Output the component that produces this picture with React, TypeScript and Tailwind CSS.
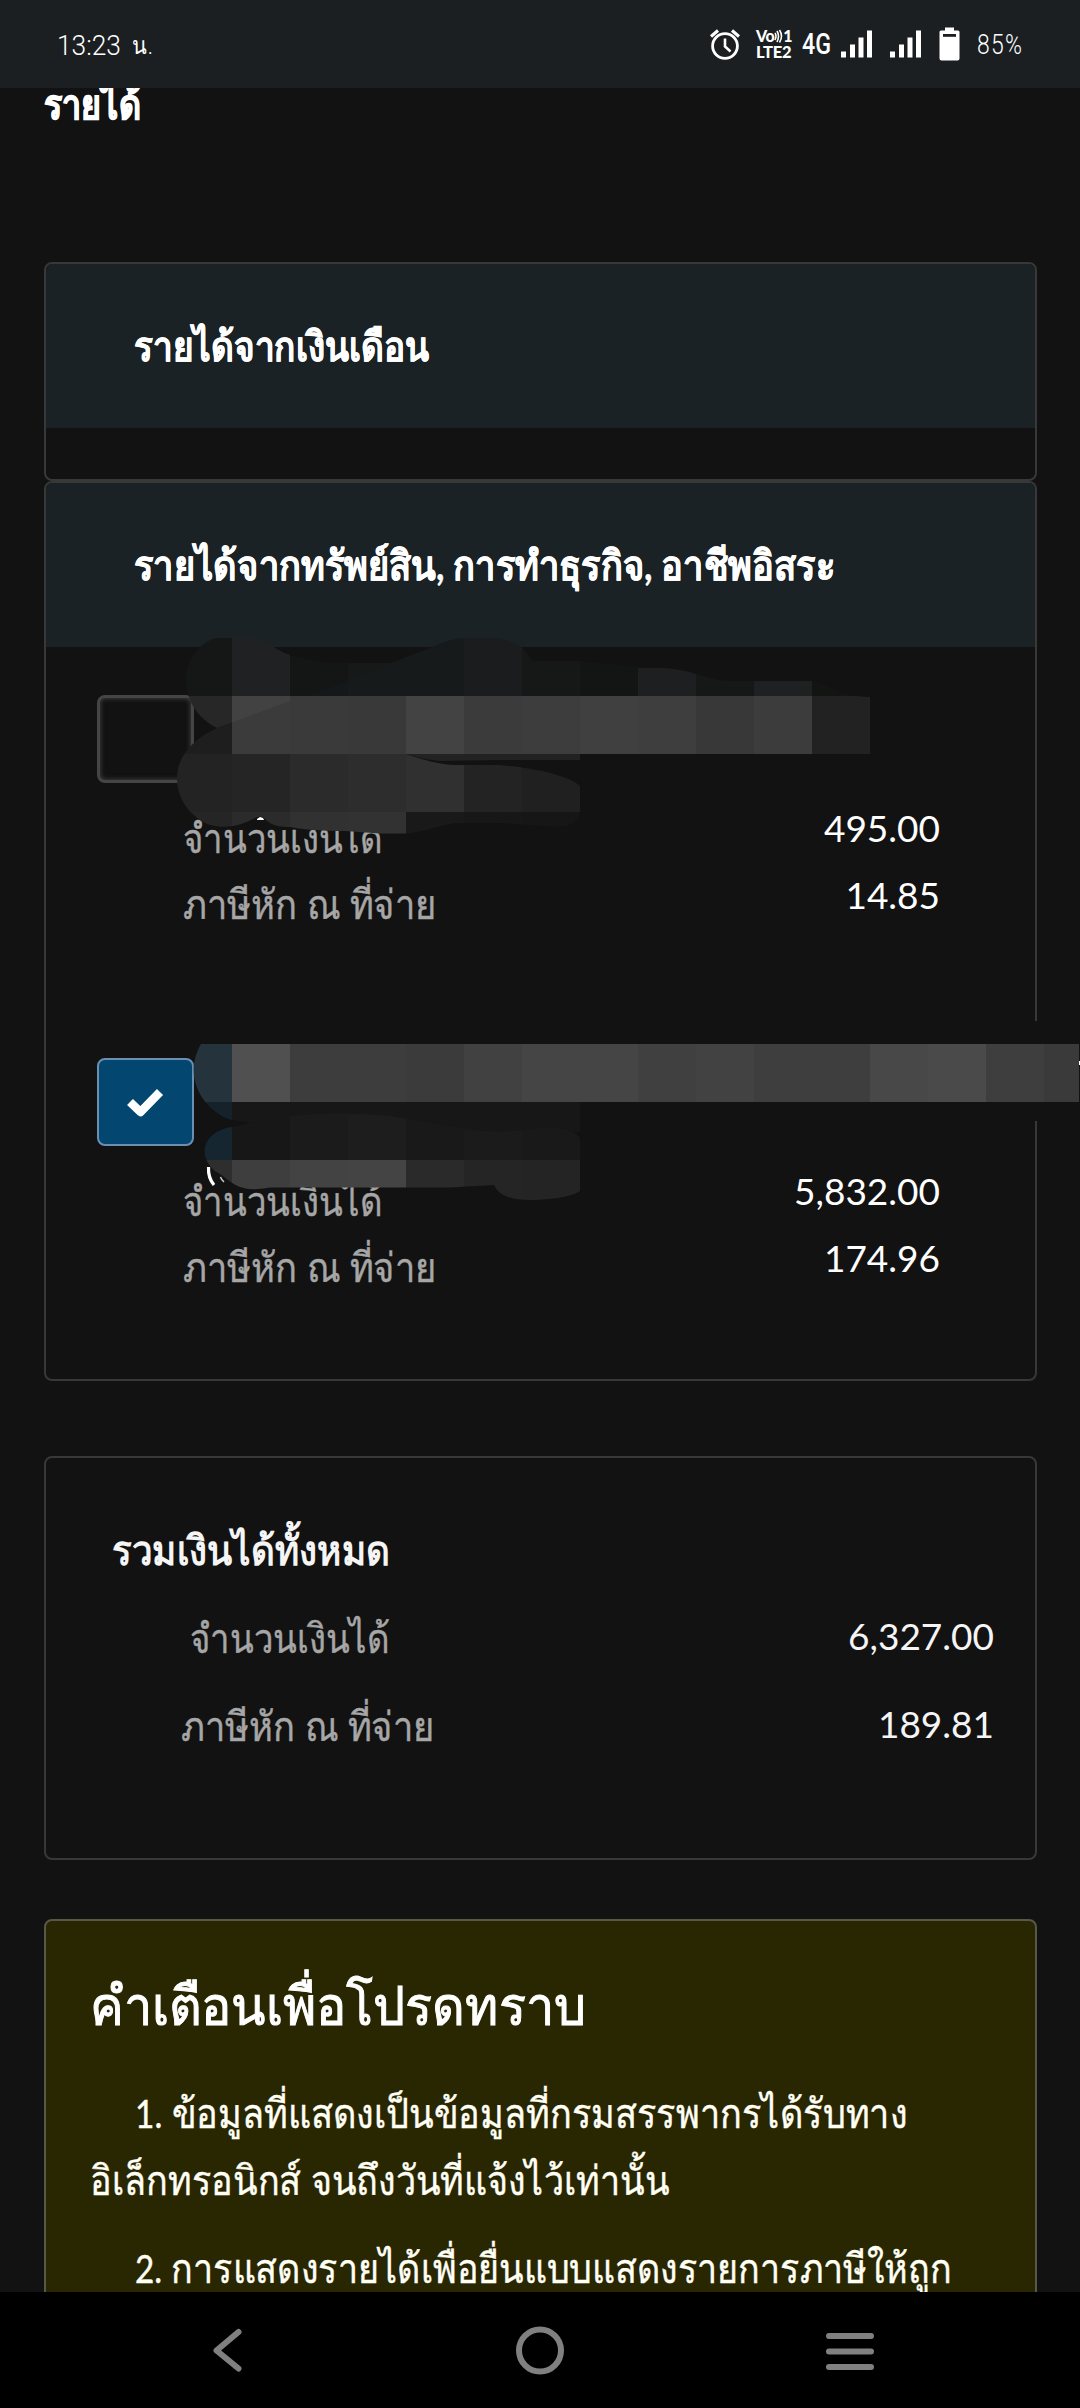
import React from "react";

type Cell = [number, number, number, number, string];

const upperCells: Cell[] = [
  [170, 630, 62, 66, "#141716"], [232, 630, 58, 66, "#202123"], [290, 630, 58, 66, "#131615"], [348, 630, 58, 66, "#171918"],
  [406, 630, 58, 66, "#16191b"], [464, 630, 58, 66, "#1a1c1e"], [522, 630, 58, 66, "#161818"], [580, 630, 58, 66, "#131514"],
  [638, 630, 58, 66, "#1e1f21"], [696, 630, 58, 66, "#161717"], [754, 630, 58, 66, "#1f2022"], [812, 630, 58, 66, "#131513"],
  [170, 696, 62, 58, "#272727"], [232, 696, 58, 58, "#424242"], [290, 696, 58, 58, "#3a3a3a"], [348, 696, 58, 58, "#393939"],
  [406, 696, 58, 58, "#434343"], [464, 696, 58, 58, "#3b3b3b"], [522, 696, 58, 58, "#3d3d3d"], [580, 696, 58, 58, "#404040"],
  [638, 696, 58, 58, "#3e3e3e"], [696, 696, 58, 58, "#383838"], [754, 696, 58, 58, "#3c3c3c"], [812, 696, 58, 58, "#222222"],
];

const lowerCells: Cell[] = [
  [170, 700, 62, 54, "#1e1e1e"], [232, 696, 58, 58, "#3b3b3b"], [170, 754, 62, 58, "#232323"], [232, 754, 58, 58, "#252525"],
  [290, 754, 58, 58, "#2b2b2b"], [348, 754, 58, 58, "#2d2d2d"], [406, 754, 58, 58, "#303030"], [464, 754, 58, 58, "#232323"],
  [522, 754, 58, 58, "#202020"],
  [170, 812, 62, 26, "#252525"], [232, 812, 58, 26, "#2b2b2b"], [290, 812, 58, 26, "#313131"], [348, 812, 58, 26, "#323232"],
  [406, 812, 58, 26, "#191919"], [464, 812, 58, 26, "#171717"], [522, 812, 58, 26, "#161616"],
];

const secondTop: Cell[] = [
  [190, 1044, 42, 58, "#25333d"], [232, 1044, 58, 58, "#505050"], [290, 1044, 116, 58, "#3d3d3d"], [406, 1044, 58, 58, "#3b3b3b"],
  [464, 1044, 58, 58, "#414141"], [522, 1044, 116, 58, "#454545"], [638, 1044, 58, 58, "#404040"], [696, 1044, 58, 58, "#424242"],
  [754, 1044, 116, 58, "#3e3e3e"], [870, 1044, 58, 58, "#484848"], [928, 1044, 58, 58, "#4a4a4a"], [986, 1044, 58, 58, "#3e3e3e"],
  [1044, 1044, 35, 58, "#3a3a3a"],
  [190, 1102, 42, 30, "#15222c"], [232, 1102, 348, 30, "#171717"],
];

const secondBottom: Cell[] = [
  [200, 1110, 32, 50, "#152630"], [232, 1110, 58, 50, "#171717"], [290, 1110, 58, 50, "#1b1b1b"], [348, 1110, 58, 50, "#1d1d1d"],
  [406, 1110, 58, 50, "#191919"], [464, 1110, 58, 50, "#1b1b1b"], [522, 1110, 58, 50, "#191919"],
  [200, 1160, 32, 42, "#2e2e2e"], [232, 1160, 58, 42, "#3e3e3e"], [290, 1160, 58, 42, "#434343"], [348, 1160, 58, 42, "#444444"],
  [406, 1160, 58, 42, "#2a2a2a"], [464, 1160, 58, 42, "#252525"], [522, 1160, 58, 42, "#242424"],
];

function Mosaic({ cells, clip }: { cells: Cell[]; clip: string }) {
  return (
    <g clipPath={`url(#${clip})`} shapeRendering="crispEdges">
      {cells.map(([x, y, w, h, fill]) => (
        <rect key={`${x}-${y}`} x={x} y={y} width={w} height={h} fill={fill} />
      ))}
    </g>
  );
}

/* Pixelated brush strokes that hide the payer names. */
function Redaction() {
  return (
    <svg className="pointer-events-none absolute left-0 top-0" width="1080" height="2408" viewBox="0 0 1080 2408">
      <defs>
        <clipPath id="a">
          <path d="M215 638H255C268 640 274 650 290 655C310 662 340 663 348 663H390L448 641Q458 638 464 638H496C516 640 527 650 532 661H580L632 666H638V668L662 668C690 669 705 679 728 681H812C830 684 838 696 870 697V754H232V723L217 728C176 708 176 652 215 638Z" />
        </clipPath>
        <clipPath id="b">
          <path d="M217 728L290 701V754H406C430 762 444 765 455 765H500C530 767 572 776 580 786V812C577 824 568 827 555 827L500 823H455C430 828 420 833 405 833.500H380L345 831C320 831 300 829 290 827C272 827 268 822 263 817Q258 816 255 818C240 826 226 829 210 825C196 820 177 804 177 778C177 755 195 738 217 728Z" />
        </clipPath>
        <clipPath id="c">
          <path d="M201 1044H1079V1102H580V1132H400L260 1124L232 1120C208 1114 180 1080 201 1044Z" />
        </clipPath>
        <clipPath id="d">
          <path d="M232 1127L260 1121C300 1112 350 1112 390 1116L460 1128Q500 1135 540 1128Q572 1126 580 1138V1191C570 1198 545 1200 530 1200Q500 1200 494 1185L450 1187.500H270C235 1194 232 1180 215 1171C196 1155 204 1131 232 1127Z" />
        </clipPath>
      </defs>
      <Mosaic cells={upperCells} clip="a" />
      <path d="M309 696L392 663L458 638H464V696Z" fill="#171b1d" opacity="0.6" />
      <Mosaic cells={lowerCells} clip="b" />
      <path d="M406 754H580V760H500L440 761Q420 759 406 754Z" fill="#222222" />
      <path d="M257 819L260 817L263 818L264 820H257Z" fill="#fff" />
      <Mosaic cells={secondTop} clip="c" />
      <Mosaic cells={secondBottom} clip="d" />
      <path d="M208.500 1167Q208 1178 214 1185" stroke="#fff" strokeWidth="3.200" fill="none" />
      <path d="M220.500 1177Q221.500 1180 224 1182" stroke="#ccc" strokeWidth="1.500" fill="none" />
      <rect x="1034" y="1021" width="4" height="23" fill="#121212" />
      <rect x="1034" y="1102" width="4" height="19" fill="#121212" />
      <rect x="1079" y="1061" width="1" height="4" fill="#fff" />
    </svg>
  );
}

function Signal() {
  return (
    <svg width="31" height="28" viewBox="0 0 31 28" fill="#fff">
      <rect x="0" y="21.500" width="5" height="6" />
      <rect x="9" y="14.500" width="5" height="13" />
      <rect x="17.500" y="7.500" width="5" height="20" />
      <rect x="26" y="0.500" width="5" height="27" />
    </svg>
  );
}

function StatusBar() {
  return (
    <header className="flex h-[88px] shrink-0 items-center bg-[#1b1f22] pl-[57px] text-white">
      <div className="flex w-[653px] whitespace-nowrap pt-[3px] font-['Roboto'] text-[28px] font-light leading-[88px]">
        <span className="w-[75px]"><span className="inline-block origin-left scale-x-[0.940]">13:23</span></span>
        <span className="inline-block origin-left scale-x-[0.900] text-[24px] tracking-[1.5px]">น.</span>
      </div>
      <svg width="30" height="32" viewBox="0 0 30 32" fill="none" stroke="#fff" strokeWidth="2.800">
        <circle cx="15" cy="18" r="12.400" />
        <path d="M15 10.500V18.500L20.500 23.500" strokeWidth="2.600" />
        <path d="M1 8.500L8 2.500M22 2.500L29 8.500" strokeWidth="3.200" />
      </svg>
      <div className="relative ml-[16px] flex h-[30px] w-[37px] flex-col font-['Lato'] font-black text-white">
        <div className="flex h-[14px] items-center text-[16px] leading-[14px]">
          <span className="tracking-[-0.5px]">Vo</span>
          <svg width="9" height="14" viewBox="0 0 9 14" fill="none" stroke="#fff" strokeWidth="1.600">
            <path d="M1 4Q3 7 1 11M3 2Q6 7 3 13M5.500 1Q9.500 7 5.500 13.500" />
          </svg>
          <span>1</span>
        </div>
        <span className="text-[16.500px] leading-[18px] tracking-[-0.2px]">LTE2</span>
      </div>
      <span className="ml-[9px] w-[39px] whitespace-nowrap font-['Roboto'] text-[29px] font-medium leading-[30px]">
        <span className="inline-block origin-left scale-x-[0.800]">4G</span>
      </span>
      <Signal />
      <div className="w-[18px]" />
      <Signal />
      <svg className="ml-[18px]" width="21" height="34" viewBox="0 0 21 34">
        <path d="M6 0.500H15V3.500H19Q20.500 3.500 20.500 5V31.500Q20.500 33.500 18.500 33.500H2.500Q0.500 33.500 0.500 31.500V5Q0.500 3.500 2 3.500H6Z" fill="#fff" />
        <rect x="4" y="7" width="13" height="2.800" fill="#1b1f22" />
      </svg>
      <span className="ml-[17px] whitespace-nowrap pt-[3px] font-['Roboto'] text-[27px] font-light">
        <span className="inline-block origin-left scale-x-[0.850] tracking-[1.5px]">85%</span>
      </span>
    </header>
  );
}

function CardHeader({ children }: { children: React.ReactNode }) {
  return (
    <div className="h-[164px] bg-[#1b2225] pl-[88px] pt-[49px]">
      <h2 className="whitespace-nowrap text-[37px] font-bold leading-[67px] text-white [-webkit-text-stroke:0.4px]">{children}</h2>
    </div>
  );
}

function AmountLabel() {
  return (
    <span className="inline-block origin-left scale-x-[0.847] text-[41px] leading-none [-webkit-text-stroke:0.4px]">จำนวนเงินได้</span>
  );
}

function TaxLabel() {
  return (
    <span className="inline-block origin-left scale-x-[0.886] text-[41px] leading-none [-webkit-text-stroke:0.4px]">ภาษีหัก ณ ที่จ่าย</span>
  );
}

function Check({ checked }: { checked?: boolean }) {
  return checked ? (
    <div className="flex h-[88px] w-[97px] items-center justify-center rounded-[8px] border-2 border-[#6a8fb0] bg-[#03466f]">
      <svg width="40" height="31" viewBox="0 0 40 31">
        <path d="M4 15L14.500 25L34 5" fill="none" stroke="#fff" strokeWidth="8.500" strokeLinejoin="round" />
      </svg>
    </div>
  ) : (
    <div className="h-[88px] w-[97px] rounded-[8px] border-[3px] border-[#454545] bg-[#121212] shadow-[inset_0_0_4px_1px_#3a3a3a]" />
  );
}

function Item({ checked, amount, tax }: { checked?: boolean; amount: string; tax: string }) {
  return (
    <div className="h-[233px] pl-[51px] pr-[95px]">
      <div className="h-[99px]">
        <Check checked={checked} />
      </div>
      <div className="flex justify-between whitespace-nowrap pl-[86px] text-[37px] leading-[67px]">
        <div className="pt-[11px] text-[#a6a6a6]">
          <p className="h-[66px]"><AmountLabel /></p>
          <p><TaxLabel /></p>
        </div>
        <div className="text-right text-white">
          <p>{amount}</p>
          <p>{tax}</p>
        </div>
      </div>
    </div>
  );
}

export default function App() {
  return (
    <div className="relative flex h-[2408px] w-[1080px] flex-col overflow-hidden bg-[#121212] font-['Lato','Noto_Sans',sans-serif]">
      <StatusBar />
      <main className="flex h-[2204px] flex-col overflow-hidden px-[44px]">
        <h1 className="h-[174px] shrink-0 whitespace-nowrap text-[41px] font-bold leading-[32px] text-white [-webkit-text-stroke:1px]">
          <span className="inline-block origin-left scale-x-[0.830]">รายได้</span>
        </h1>
        <section className="mr-[-1px] h-[219px] shrink-0 overflow-hidden rounded-[8px] border-2 border-[#383838]">
          <CardHeader>
            <span className="inline-block origin-left scale-x-[0.856] text-[41px] leading-none">รายได้จากเงินเดือน</span>
          </CardHeader>
        </section>
        <section className="mr-[-1px] h-[900px] shrink-0 overflow-hidden rounded-[8px] border-2 border-[#383838]">
          <CardHeader>
            <span className="inline-block origin-left scale-x-[0.883] text-[41px] leading-none">รายได้จากทรัพย์สิน, การทำธุรกิจ, อาชีพอิสระ</span>
          </CardHeader>
          <div className="flex flex-col gap-[130px] pt-[48px]">
            <Item amount="495.00" tax="14.85" />
            <Item checked amount="5,832.00" tax="174.96" />
          </div>
        </section>
        <section className="mr-[-1px] mt-[75px] h-[404px] shrink-0 rounded-[8px] border-2 border-[#383838] pl-[66px] pr-[41px] pt-[59px] text-[37px] leading-[67px]">
          <h2 className="whitespace-nowrap font-bold text-[#f5f5f5]">
            <span className="inline-block origin-left scale-x-[0.897] text-[41px] leading-none">รวมเงินได้ทั้งหมด</span>
          </h2>
          <div className="mt-[21px] flex h-[67px] justify-between whitespace-nowrap pl-[78px]">
            <span className="text-[#a6a6a6]"><AmountLabel /></span>
            <span className="mt-[-3px] text-[#f5f5f5]">6,327.00</span>
          </div>
          <div className="mt-[21px] flex h-[67px] justify-between whitespace-nowrap pl-[69px]">
            <span className="text-[#a6a6a6]"><TaxLabel /></span>
            <span className="mt-[-3px] text-[#f5f5f5]">189.81</span>
          </div>
        </section>
        <section className="mr-[-1px] mt-[59px] h-[500px] shrink-0 rounded-[8px] border-2 border-[#57574a] bg-[#292602] px-[44px] pt-[50px] text-[37px] leading-[67px] text-[#fffff5]">
          <h2 className="whitespace-nowrap text-[50px] leading-[70px] text-white [-webkit-text-stroke:1px]">
            <span className="inline-block origin-left scale-x-[0.935] text-[54px] leading-none">คำเตือนเพื่อโปรดทราบ</span>
          </h2>
          <div className="mt-[39px] whitespace-nowrap [-webkit-text-stroke:0.4px]">
            <p>
              <span className="ml-[45px] inline-block origin-left scale-x-[0.880] text-[41px] leading-none"><span className="text-[38px]">1.</span> ข้อมูลที่แสดงเป็นข้อมูลที่กรมสรรพากรได้รับทาง</span>
            </p>
            <p>
              <span className="inline-block origin-left scale-x-[0.877] text-[41px] leading-none">อิเล็กทรอนิกส์ จนถึงวันที่แจ้งไว้เท่านั้น</span>
            </p>
            <p className="mt-[21px]">
              <span className="ml-[45px] inline-block origin-left scale-x-[0.875] text-[41px] leading-none"><span className="text-[38px]">2.</span> การแสดงรายได้เพื่อยื่นแบบแสดงรายการภาษีให้ถูก</span>
            </p>
          </div>
        </section>
      </main>
      <nav className="flex h-[116px] shrink-0 items-center bg-black pl-[211px]">
        <svg width="663" height="50" viewBox="0 0 663 50" fill="none" stroke="#808080" strokeWidth="6" strokeLinecap="round" strokeLinejoin="round">
          <path d="M27.500 7L5.500 25.500L27.500 43.500" />
          <circle cx="329" cy="25.500" r="21" />
          <path d="M618 11H660M618 26.500H660M618 42H660" />
        </svg>
      </nav>
      <Redaction />
    </div>
  );
}
